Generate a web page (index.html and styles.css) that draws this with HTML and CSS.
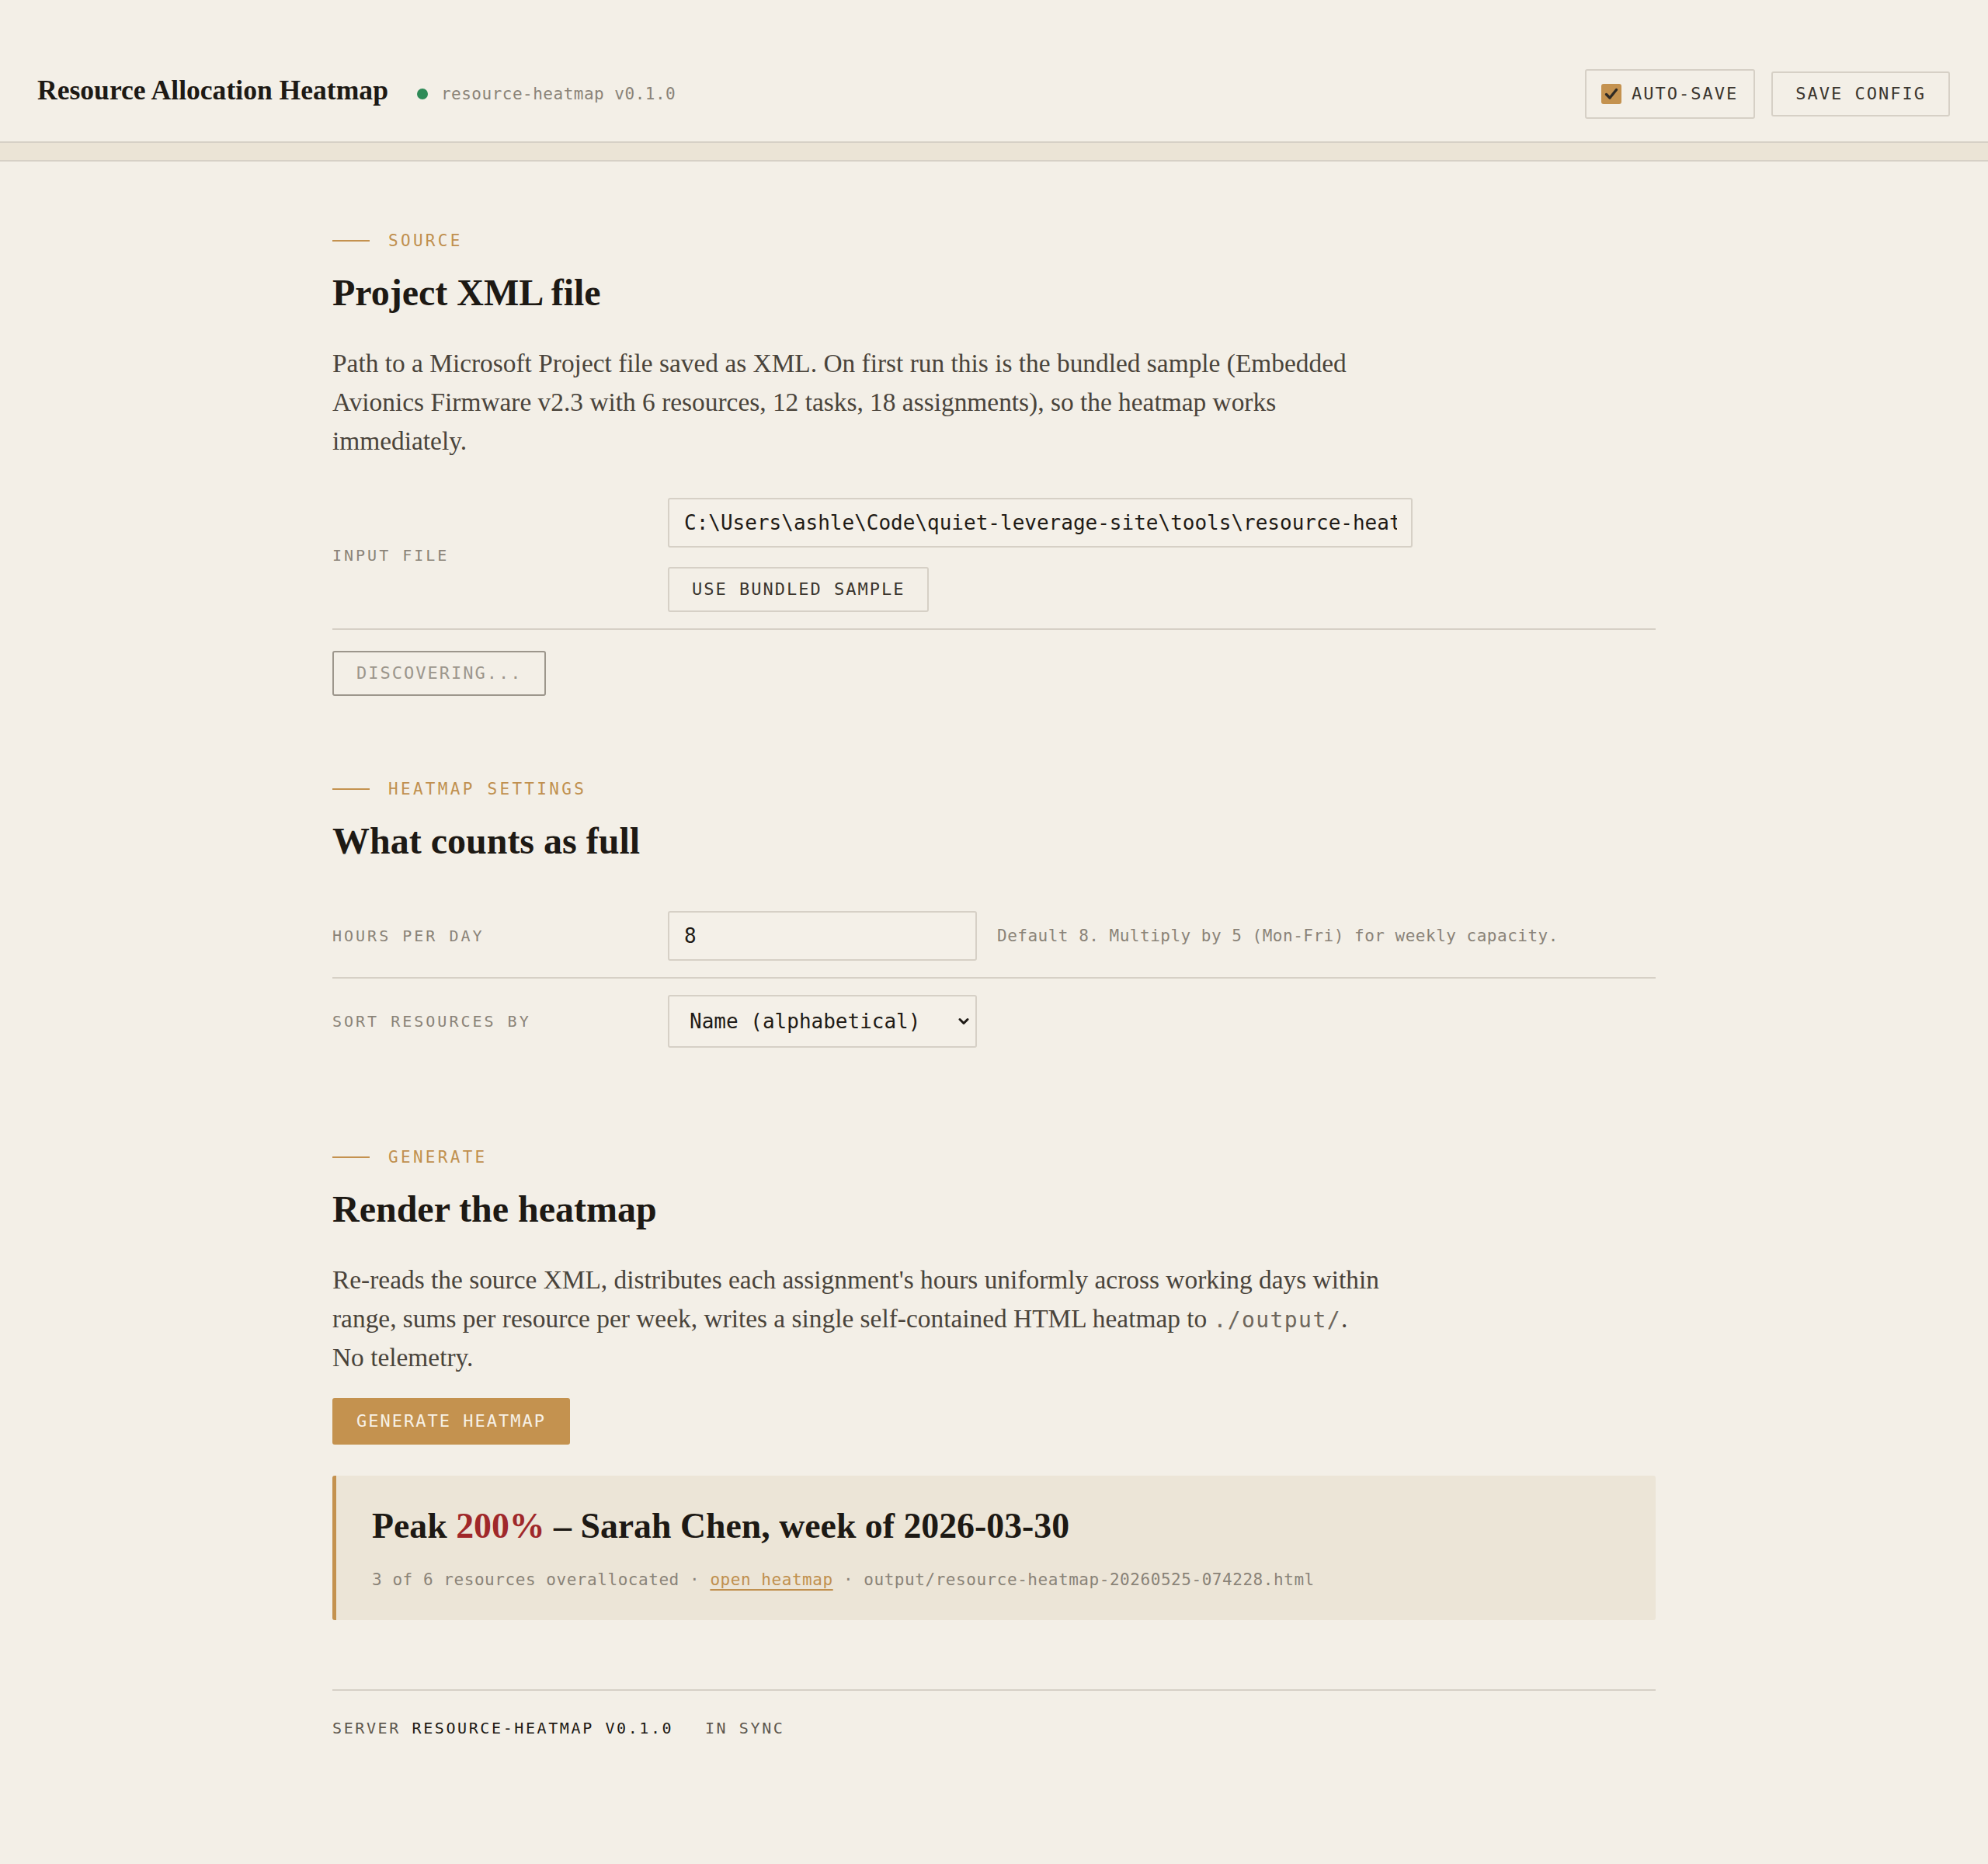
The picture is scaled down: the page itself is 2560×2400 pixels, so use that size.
FILE: index.html
```html
<!DOCTYPE html>
<html lang="en">
<head>
    <meta charset="UTF-8">
    <meta name="viewport" content="width=device-width, initial-scale=1.0">
    <title>Resource Allocation Heatmap</title>
    <link rel="stylesheet" href="styles.css">
</head>
<body>

<header class="topbar">
    <div class="brand">
        <h1>Resource Allocation Heatmap</h1>
        <span class="status-dot"></span>
        <span class="version">resource-heatmap v0.1.0</span>
    </div>
    <div class="actions">
        <label class="toggle">
            <span class="check">
                <svg width="26" height="26" viewBox="0 0 26 26">
                    <rect x="0" y="0" width="26" height="26" rx="3" fill="#c4924f"/>
                    <path d="M6.5 13.5 L11 18 L19.5 7.5" fill="none" stroke="#2f2a24" stroke-width="3.4" stroke-linecap="round" stroke-linejoin="round"/>
                </svg>
            </span>
            AUTO-SAVE
        </label>
        <button class="btn">SAVE CONFIG</button>
    </div>
</header>
<div class="subbar"></div>

<main class="page">

    <!-- source -->
    <section class="block">
        <div class="eyebrow">Source</div>
        <h2>Project XML file</h2>
        <p class="lead">Path to a Microsoft Project file saved as XML. On first run this is the bundled sample (Embedded Avionics Firmware v2.3 with 6 resources, 12 tasks, 18 assignments), so the heatmap works immediately.</p>

        <div class="field ruled">
            <label class="field-label" for="inputFile">Input file</label>
            <div class="field-control stack">
                <input id="inputFile" class="text-input wide" type="text" value="C:\Users\ashle\Code\quiet-leverage-site\tools\resource-heatmap\samples\embedded-avionics-v2.3.xml">
                <button class="btn">USE BUNDLED SAMPLE</button>
            </div>
        </div>
        <button class="btn btn-muted discover" disabled>DISCOVERING...</button>
    </section>

    <!-- settings -->
    <section class="block">
        <div class="eyebrow">Heatmap settings</div>
        <h2 class="h2-tight">What counts as full</h2>

        <div class="field ruled">
            <label class="field-label" for="hoursPerDay">Hours per day</label>
            <div class="field-control inline">
                <input id="hoursPerDay" class="text-input narrow" type="text" value="8">
                <span class="hint">Default 8. Multiply by 5 (Mon-Fri) for weekly capacity.</span>
            </div>
        </div>
        <div class="field">
            <label class="field-label" for="sortBy">Sort resources by</label>
            <div class="field-control">
                <div class="select-wrap">
                    <select id="sortBy" class="select-input">
                        <option value="name">Name (alphabetical)</option>
                        <option value="peak">Peak allocation</option>
                        <option value="total">Total hours</option>
                    </select>
                    <svg class="chevron" width="14" height="10" viewBox="0 0 14 10">
                        <path d="M2 2.5 L7 7.5 L12 2.5" fill="none" stroke="#1f1b16" stroke-width="3" stroke-linecap="round" stroke-linejoin="round"/>
                    </svg>
                </div>
            </div>
        </div>
    </section>

    <!-- generate -->
    <section class="block">
        <div class="eyebrow">Generate</div>
        <h2>Render the heatmap</h2>
        <p class="lead">Re-reads the source XML, distributes each assignment's hours uniformly across working days within range, sums per resource per week, writes a single self-contained HTML heatmap to <code>./output/</code>. <span class="nowrap">No telemetry.</span></p>

        <button class="btn btn-primary">GENERATE HEATMAP</button>

        <div class="result">
            <div class="result-title">Peak <span class="over">200%</span> – Sarah Chen, week of 2026-03-30</div>
            <div class="result-meta">3 of 6 resources overallocated · <a href="#">open heatmap</a> · output/resource-heatmap-20260525-074228.html</div>
        </div>
    </section>

    <footer class="statusline">
        <span class="muted">SERVER</span> <span class="strong">RESOURCE-HEATMAP V0.1.0</span>
        <span class="sync">IN SYNC</span>
    </footer>

</main>

</body>
</html>
```

FILE: styles.css
```css
body {
    margin: 0;
    padding: 0;
    background-color: #f3efe7;
    color: #1f1b16;
    font-family: 'Liberation Serif', serif;
}

/* top bar */
.topbar {
    box-sizing: border-box;
    height: 184px;
    padding: 60px 49px 0 48px;
    display: flex;
    align-items: center;
    justify-content: space-between;
    border-bottom: 2px solid #d6d0c6;
}

.brand {
    display: flex;
    align-items: baseline;
    margin-bottom: 10px;
}

.brand h1 {
    margin: 0 37px 0 0;
    font-size: 35.6px;
    line-height: 40px;
    font-weight: bold;
    color: #1d1914;
}

.status-dot {
    width: 14px;
    height: 14px;
    border-radius: 50%;
    background: #2e8a57;
    margin-right: 17px;
}

.version {
    font-family: 'DejaVu Sans Mono', monospace;
    font-size: 21px;
    letter-spacing: 0.5px;
    color: #8a8378;
}

.actions {
    display: flex;
    align-items: center;
    gap: 21px;
}

.toggle {
    display: flex;
    align-items: center;
    gap: 13px;
    padding: 17px 20px 17px 19px;
    border: 2px solid #d6d0c6;
    border-radius: 3px;
    font-family: 'DejaVu Sans Mono', monospace;
    font-size: 22px;
    line-height: 26px;
    letter-spacing: 2px;
    color: #3a352e;
}

.check {
    display: block;
    width: 26px;
    height: 26px;
}

.check svg {
    display: block;
}

.subbar {
    height: 22px;
    background: #ebe4d6;
    border-bottom: 2px solid #d6d0c6;
}

/* page */
.page {
    width: 1704px;
    margin: 0 auto;
    padding-top: 90px;
    padding-bottom: 120px;
}

.block + .block {
    margin-top: 108px;
}

.eyebrow {
    display: flex;
    align-items: center;
    gap: 24px;
    font-family: 'DejaVu Sans Mono', monospace;
    font-size: 21px;
    line-height: 24px;
    letter-spacing: 3.3px;
    text-transform: uppercase;
    color: #c0904f;
}

.eyebrow::before {
    content: '';
    width: 48px;
    height: 2px;
    background: #c4924f;
}

h2 {
    margin: 27px 0 38px;
    font-size: 48px;
    line-height: 56px;
    font-weight: bold;
    color: #1d1914;
}

.h2-tight {
    margin-bottom: 41px;
}

.lead {
    max-width: 1360px;
    margin: 0 0 27px;
    font-size: 33.4px;
    line-height: 50px;
    color: #4a443b;
}

.lead code {
    font-family: 'DejaVu Sans Mono', monospace;
    font-size: 28px;
    line-height: 1;
    letter-spacing: 1.4px;
    color: #6e675d;
}

.nowrap {
    white-space: nowrap;
}

/* form rows */
.field {
    display: grid;
    grid-template-columns: 432px 1fr;
    align-items: center;
    padding: 21px 0;
}

.field.ruled {
    border-bottom: 2px solid #d6d0c6;
}

.field-label {
    font-family: 'DejaVu Sans Mono', monospace;
    font-size: 20px;
    letter-spacing: 3px;
    text-transform: uppercase;
    color: #8a8378;
}

.field-control.stack {
    display: flex;
    flex-direction: column;
    align-items: flex-start;
    gap: 25px;
}

.field-control.inline {
    display: flex;
    align-items: center;
    gap: 26px;
}

.text-input {
    box-sizing: border-box;
    height: 64px;
    padding: 15px 18px 15px 19px;
    border: 2px solid #d6d0c6;
    border-radius: 3px;
    background: #f4f0e8;
    font-family: 'DejaVu Sans Mono', monospace;
    font-size: 26px;
    line-height: 30px;
    color: #1f1b16;
    outline: none;
}

.text-input.wide {
    width: 959px;
}

.text-input.narrow {
    width: 398px;
}

.hint {
    font-family: 'DejaVu Sans Mono', monospace;
    font-size: 21px;
    letter-spacing: 0.5px;
    color: #8a8378;
}

.select-wrap {
    position: relative;
    width: 398px;
}

.select-input {
    box-sizing: border-box;
    width: 398px;
    height: 68px;
    padding: 0 40px 0 26px;
    border: 2px solid #d6d0c6;
    border-radius: 3px;
    background-color: #f4f0e8;
    font-family: 'DejaVu Sans Mono', monospace;
    font-size: 26px;
    color: #1f1b16;
    appearance: none;
    -webkit-appearance: none;
    outline: none;
}

.chevron {
    position: absolute;
    right: 10px;
    top: 29px;
    pointer-events: none;
}

/* buttons */
.btn {
    box-sizing: border-box;
    padding: 16px 29px;
    border: 2px solid #d6d0c6;
    border-radius: 3px;
    background: transparent;
    font-family: 'DejaVu Sans Mono', monospace;
    font-size: 22px;
    line-height: 22px;
    letter-spacing: 2px;
    color: #3a352e;
    cursor: pointer;
}

.btn-muted {
    border-color: #9c968c;
    color: #9c968c;
    cursor: default;
}

.discover {
    margin-top: 27px;
}

.btn-primary {
    padding: 17px 29px;
    border-color: #c4924f;
    background: #c4924f;
    color: #f7f1e6;
}

/* result card */
.result {
    margin-top: 40px;
    padding: 38px 40px 38px 46px;
    background: #ece5d7;
    border-left: 5px solid #c4924f;
    border-radius: 3px;
}

.result-title {
    font-size: 45.8px;
    line-height: 54px;
    font-weight: bold;
    color: #1d1914;
}

.result-title .over {
    color: #a0282a;
}

.result-meta {
    margin-top: 28px;
    font-family: 'DejaVu Sans Mono', monospace;
    font-size: 21px;
    line-height: 28px;
    letter-spacing: 0.55px;
    color: #8a8378;
}

.result-meta a {
    color: #c0904f;
    text-decoration: underline;
    text-decoration-thickness: 2px;
    text-underline-offset: 5px;
}

/* footer */
.statusline {
    margin-top: 89px;
    padding-top: 36px;
    border-top: 2px solid #d6d0c6;
    font-family: 'DejaVu Sans Mono', monospace;
    font-size: 20px;
    line-height: 24px;
    letter-spacing: 2.6px;
}

.statusline .muted {
    color: #5e584f;
}

.statusline .strong {
    color: #1d1914;
}

.statusline .sync {
    margin-left: 26px;
    color: #5e584f;
}
```
